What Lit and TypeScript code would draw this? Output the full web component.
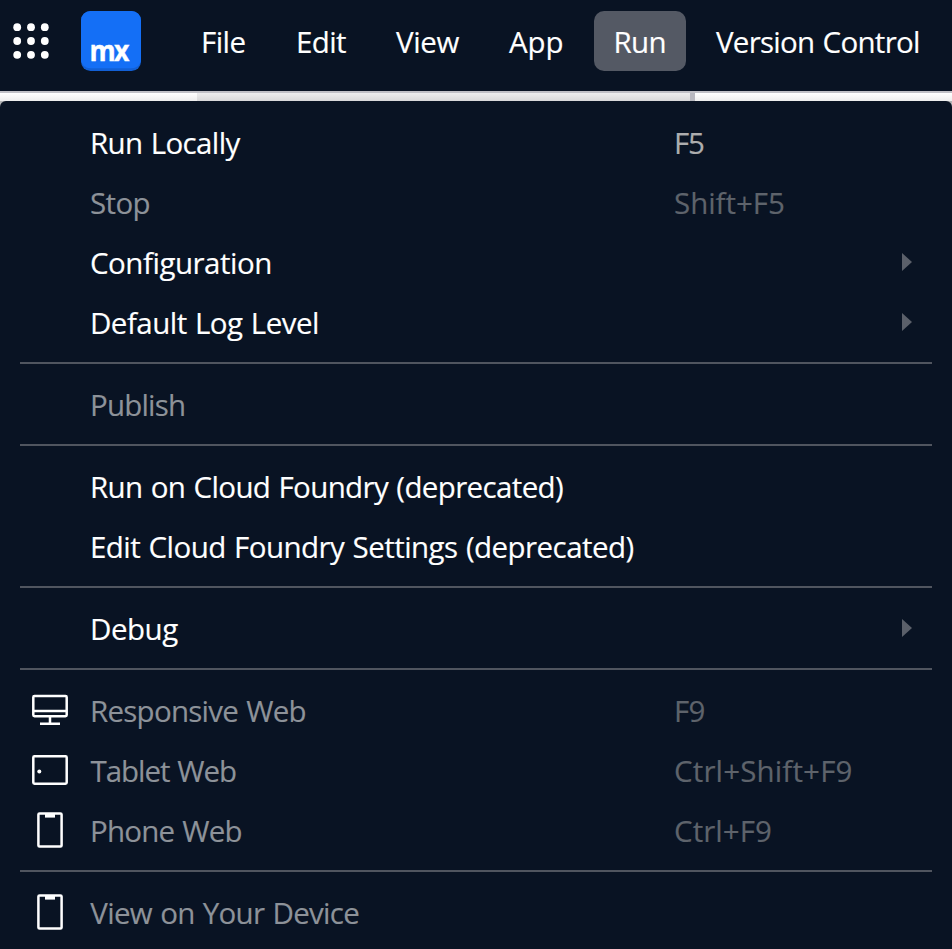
import { LitElement, html, svg, css, nothing } from "lit";
import { customElement, property } from "lit/decorators.js";

const FACE = '"Open Sans", "Noto Sans", sans-serif';
const SIZE = 29.5;
const WORD_GAP = 1.2;

const pen = document.createElement("canvas").getContext("2d")!;

/* Tracking that gives a label the wanted ink width, and the offset of its first glyph. */
function track(text: string, ink: number) {
  pen.font = `${SIZE}px ${FACE}`;
  const m = pen.measureText(text);
  const gaps = (text.split(" ").length - 1) * WORD_GAP;
  const natural = m.actualBoundingBoxRight + m.actualBoundingBoxLeft + gaps;
  return { spacing: (ink - natural) / (text.length - 1), shift: m.actualBoundingBoxLeft };
}

@customElement("ui-label")
class UiLabel extends LitElement {
  @property() text = "";
  @property({ type: Number }) ink = 0;
  @property({ type: Number }) inset = 0;
  static styles = css`
    :host { display: block; white-space: pre; }
    .t {
      display: block;
      font-variant-ligatures: none;
      word-spacing: 1.2px;
      -webkit-text-stroke: 0.15px currentColor;
    }
  `;
  render() {
    const { spacing, shift } = track(this.text, this.ink);
    return html`<span class="t" style="letter-spacing:${spacing}px;margin-left:${this.inset + shift}px">${this.text}</span>`;
  }
}

type Icon = "monitor" | "tablet" | "phone";
interface Item {
  text: string;
  ink: number;
  inset: number;
  off?: boolean;
  keys?: string;
  keysInk?: number;
  keysInset?: number;
  sub?: boolean;
  icon?: Icon;
}

const GROUPS: Item[][] = [
  [
    { text: "Run Locally", ink: 148.5, inset: 2, keys: "F5", keysInk: 28, keysInset: 2 },
    { text: "Stop", ink: 58.5, inset: 1, off: true, keys: "Shift+F5", keysInk: 109, keysInset: 1 },
    { text: "Configuration", ink: 179.3, inset: 1, sub: true },
    { text: "Default Log Level", ink: 225, inset: 2, sub: true },
  ],
  [{ text: "Publish", ink: 92, inset: 2, off: true }],
  [
    { text: "Run on Cloud Foundry (deprecated)", ink: 471, inset: 2 },
    { text: "Edit Cloud Foundry Settings (deprecated)", ink: 541.5, inset: 2 },
  ],
  [{ text: "Debug", ink: 86.2, inset: 2, sub: true }],
  [
    { text: "Responsive Web", ink: 213.5, inset: 2, off: true, icon: "monitor", keys: "F9", keysInk: 28.5, keysInset: 2 },
    { text: "Tablet Web", ink: 145.5, inset: 0.5, off: true, icon: "tablet", keys: "Ctrl+Shift+F9", keysInk: 176.5, keysInset: 1 },
    { text: "Phone Web", ink: 149.5, inset: 2, off: true, icon: "phone", keys: "Ctrl+F9", keysInk: 96, keysInset: 1 },
  ],
  [{ text: "View on Your Device", ink: 269, inset: 0.3, off: true, icon: "phone" }],
];

const BAR = [
  { text: "File", ink: 42.5, inset: 2, w: 95 },
  { text: "Edit", ink: 48, inset: 2, w: 100 },
  { text: "View", ink: 63.5, inset: 0, w: 113 },
  { text: "App", ink: 53.5, inset: 0, w: 105 },
  { text: "Run", ink: 49, inset: 1.5, w: 92, on: true },
  { text: "Version Control", ink: 202, inset: 0, w: 254 },
];

const ICONS = {
  monitor: svg`
    <rect x="3.3" y="16.1" width="33.4" height="20.2" rx="1.2" />
    <path d="M3 31H37M20 37V43M10 43.8H30" />`,
  tablet: svg`
    <rect x="3.3" y="16.2" width="33.4" height="27.6" rx="1.2" />
    <circle class="solid" cx="9.3" cy="31.5" r="2" />`,
  phone: svg`
    <rect x="8.4" y="13.4" width="23.2" height="33.2" rx="1.2" />
    <path class="solid" d="M15 13H25V17.6H15Z" />`,
};

@customElement("menu-row")
class MenuRow extends LitElement {
  @property({ attribute: false }) item!: Item;
  static styles = css`
    .row {
      display: grid;
      grid-template: 60px / 30px 60px 584px 228px 1fr;
      height: 60px;
      line-height: 61px;
      align-items: center;
      color: #fff;
    }
    .keys { color: #adadae; }
    .off { color: #8d9299; }
    .off .keys { color: #5e636b; }
    .icon {
      display: block;
      width: 40px;
      height: 60px;
      margin-top: -1px;
      fill: none;
      stroke: #fff;
      stroke-width: 2.5;
    }
    .icon .solid { fill: #fff; stroke: none; }
    .arrow { display: block; width: 10px; height: 18px; fill: #5b606a; margin-bottom: 1px; }
  `;
  render() {
    const i = this.item;
    return html`<div class="row ${i.off ? "off" : ""}">
      <span></span>
      <span>${i.icon ? html`<svg class="icon" viewBox="0 0 40 60">${ICONS[i.icon]}</svg>` : nothing}</span>
      <ui-label .text=${i.text} .ink=${i.ink} .inset=${i.inset}></ui-label>
      <span class="keys">${i.keys
        ? html`<ui-label .text=${i.keys} .ink=${i.keysInk!} .inset=${i.keysInset!}></ui-label>`
        : nothing}</span>
      ${i.sub ? html`<svg class="arrow" viewBox="0 0 10 18"><path d="M0 0L10 9L0 18Z" /></svg>` : nothing}
    </div>`;
  }
}

@customElement("app-root")
class AppRoot extends LitElement {
  static styles = css`
    :host {
      display: flex;
      flex-direction: column;
      width: 952px;
      height: 949px;
      overflow: hidden;
      background: #fff;
      font: 29.5px "Open Sans", "Noto Sans", sans-serif;
    }
    .bar {
      display: flex;
      box-sizing: border-box;
      flex: 0 0 93px;
      padding-top: 11px;
      background: #091323;
      border-bottom: 2px solid #c0c0c6;
      color: #fff;
    }
    .dots { width: 36px; height: 36px; margin: 12px 32px 0 13px; fill: #fff; }
    .logo { width: 60px; height: 60px; margin-right: 40px; }
    .logo text {
      font: 700 29px "Open Sans", sans-serif;
      letter-spacing: -1.6px;
      fill: #fff;
      stroke: #fff;
      stroke-width: 0.4;
    }
    .tab {
      box-sizing: border-box;
      height: 60px;
      line-height: 61px;
      padding-left: 20px;
      border-radius: 10px;
      white-space: nowrap;
      flex: none;
    }
    .on { background: #545964; margin-right: 10px; }
    .strip { display: flex; flex: 0 0 8px; }
    .left { width: 197px; background: linear-gradient(#fff, #ededed); }
    .mid { width: 493px; background: linear-gradient(#ededee, #d8d8d9); }
    .split { width: 5px; background: #b9b9c0; }
    .right { flex: 1; background: linear-gradient(#fff, #ededed); }
    .under { background: #b4b4b6; flex: 1; }
    .menu {
      box-sizing: border-box;
      height: 100%;
      padding-top: 11px;
      background: #091323;
      border-radius: 6px 6px 0 0;
    }
    .rule { height: 2px; margin: 10px 20px; background: #50555f; }
  `;
  render() {
    return html`
      <div class="bar">
        <svg class="dots" viewBox="0 0 36 36">
          ${[4.2, 18, 31.8].map((y) => [4.2, 18, 31.8].map((x) => svg`<circle cx=${x} cy=${y} r="3.9" />`))}
        </svg>
        <svg class="logo" viewBox="0 0 60 60">
          <rect width="60" height="60" rx="9.5" fill="#1260d6" />
          <path d="M9.5 0H50.5A9.5 9.5 0 0 1 60 9.5V49A9.5 8.5 0 0 1 50.5 57.3H9.5A9.5 8.5 0 0 1 0 49V9.5A9.5 9.5 0 0 1 9.5 0Z" fill="#146ff6" />
          <text transform="translate(8.4 50) scale(.92 1)">mx</text>
        </svg>
        ${BAR.map((b) => html`<div class="tab ${b.on ? "on" : ""}" style="width:${b.w}px">
          <ui-label .text=${b.text} .ink=${b.ink} .inset=${b.inset}></ui-label>
        </div>`)}
      </div>
      <div class="strip">
        <div class="left"></div><div class="mid"></div><div class="split"></div><div class="right"></div>
      </div>
      <div class="under">
        <div class="menu">
          ${GROUPS.map((g, n) => html`
            ${n ? html`<div class="rule"></div>` : nothing}
            ${g.map((i) => html`<menu-row .item=${i}></menu-row>`)}`)}
        </div>
      </div>`;
  }
}
